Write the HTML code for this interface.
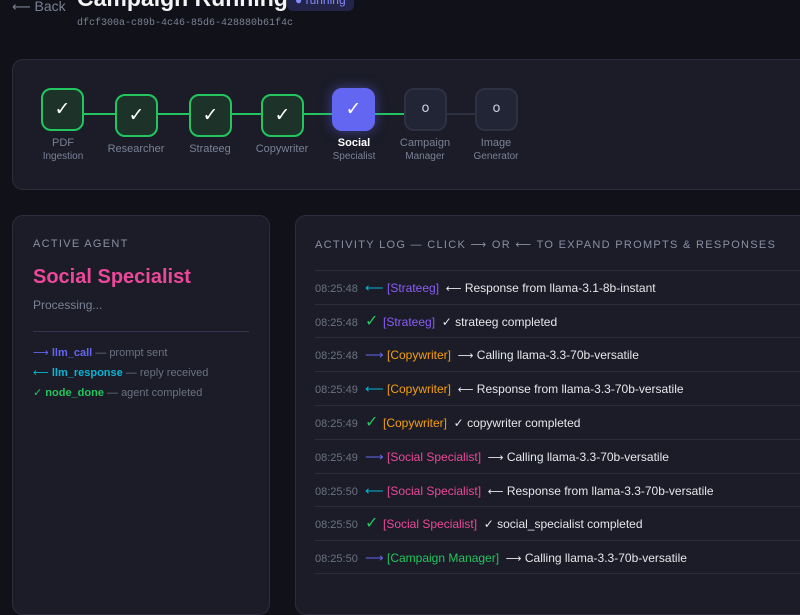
<!DOCTYPE html>
<html><head><meta charset="utf-8"><style>
*{margin:0;padding:0;box-sizing:border-box}
body{width:800px;height:600px;overflow:hidden;background:#111219;font-family:"Liberation Sans",sans-serif;position:relative;color:#e5e7eb}
.a{position:absolute;white-space:nowrap}
.panel{position:absolute;background:#1b1c28;border:1px solid #2b2d3c;border-radius:11px}
.box{position:absolute;width:43px;height:43px;border-radius:10px;border:2px solid #22c55e;background:#1d3329;color:#fff;font-size:19px;text-align:center;line-height:38px;font-family:"DejaVu Sans",sans-serif}
.pend{border-color:#2e3142;background:#222536;font-size:13px;color:#cbd5e1}
.ln{position:absolute;height:2px;background:#22c55e;top:113px}
.lab{position:absolute;text-align:center;width:90px;color:#7a8194;font-size:11px;line-height:13px}
.lab small{font-size:10px;display:block}
.row{position:absolute;left:315px;width:485px;height:34px;border-top:1px solid #2b2d3c;font-size:12px;line-height:33px;white-space:nowrap}
.t{color:#6b7280;font-size:11px;display:inline-block;width:50px}
.ic{display:inline-block;width:22px;font-size:13px}
.ar{font-family:"DejaVu Sans",sans-serif;font-size:11px}
</style></head><body>
<div class="a" style="left:12px;top:-2px;font-size:14px;color:#7a8194"><span class="ar" style="font-size:13px">⟵</span> Back</div>
<div class="a" style="left:77px;top:-15px;font-size:23px;font-weight:bold;color:#f3f4f6">Campaign Running</div>
<div class="a" style="left:287px;top:-9px;height:20px;padding:0 8px;border-radius:6px;background:#23244a;color:#818cf8;font-size:12px;line-height:18px">● running</div>
<div class="a" style="left:77px;top:18px;font-family:'Liberation Mono',monospace;font-size:10px;color:#7a8194">dfcf300a-c89b-4c46-85d6-428880b61f4c</div>

<div class="panel" style="left:12px;top:59px;width:800px;height:131px"></div>
<div class="ln" style="left:84px;width:31px"></div>
<div class="ln" style="left:157px;width:33px"></div>
<div class="ln" style="left:231px;width:30px"></div>
<div class="ln" style="left:303px;width:30px"></div>
<div class="ln" style="left:375px;width:30px"></div>
<div class="ln" style="left:446px;width:30px;background:#2e3142"></div>
<div class="box" style="left:41px;top:88px">✓</div>
<div class="box" style="left:115px;top:94px">✓</div>
<div class="box" style="left:189px;top:94px">✓</div>
<div class="box" style="left:261px;top:94px">✓</div>
<div class="box" style="left:332px;top:88px;background:#6366f1;border-color:#6366f1;box-shadow:0 0 12px rgba(99,102,241,.5)">✓</div>
<div class="box pend" style="left:404px;top:88px">o</div>
<div class="box pend" style="left:475px;top:88px">o</div>
<div class="lab" style="left:18px;top:137px">PDF<small>Ingestion</small></div>
<div class="lab" style="left:91px;top:143px">Researcher</div>
<div class="lab" style="left:165px;top:143px">Strateeg</div>
<div class="lab" style="left:237px;top:143px">Copywriter</div>
<div class="lab" style="left:309px;top:137px;color:#fff;font-weight:bold">Social<small style="font-weight:normal;color:#7a8194">Specialist</small></div>
<div class="lab" style="left:380px;top:137px">Campaign<small>Manager</small></div>
<div class="lab" style="left:451px;top:137px">Image<small>Generator</small></div>

<div class="panel" style="left:12px;top:215px;width:258px;height:400px"></div>
<div class="a" style="left:33px;top:238px;font-size:11px;letter-spacing:1.3px;color:#8a8fa3">ACTIVE AGENT</div>
<div class="a" style="left:33px;top:266px;font-size:20px;font-weight:bold;color:#ec4899">Social Specialist</div>
<div class="a" style="left:33px;top:298px;font-size:12px;color:#7a8194">Processing...</div>
<div class="a" style="left:33px;top:331px;width:216px;height:1px;background:#33364a"></div>
<div class="a" style="left:33px;top:346px;font-size:11px;color:#6b7280"><span style="color:#6366f1"><span class="ar">⟶</span> <b>llm_call</b></span> — prompt sent</div>
<div class="a" style="left:33px;top:366px;font-size:11px;color:#6b7280"><span style="color:#06b6d4"><span class="ar">⟵</span> <b>llm_response</b></span> — reply received</div>
<div class="a" style="left:33px;top:386px;font-size:11px;color:#6b7280"><span style="color:#22c55e">✓ <b>node_done</b></span> — agent completed</div>

<div class="panel" style="left:295px;top:215px;width:520px;height:400px"></div>
<div class="a" style="left:315px;top:238px;font-size:11px;letter-spacing:1.3px;color:#8a8fa3">ACTIVITY LOG — CLICK <span class="ar">⟶</span> OR <span class="ar">⟵</span> TO EXPAND PROMPTS &amp; RESPONSES</div>
<div class="row" style="top:270px"><span class="t">08:25:48</span><span class="ic" style="color:#06b6d4">⟵</span><span style="color:#8b5cf6">[Strateeg]</span>&nbsp; <span class="ar">⟵</span> Response from llama-3.1-8b-instant</div>
<div class="row" style="top:304px"><span class="t">08:25:48</span><span class="ic" style="color:#22c55e;width:18px;font-size:16px">✓</span><span style="color:#8b5cf6">[Strateeg]</span>&nbsp; ✓ strateeg completed</div>
<div class="row" style="top:337px"><span class="t">08:25:48</span><span class="ic" style="color:#6366f1">⟶</span><span style="color:#f59e0b">[Copywriter]</span>&nbsp; <span class="ar">⟶</span> Calling llama-3.3-70b-versatile</div>
<div class="row" style="top:371px"><span class="t">08:25:49</span><span class="ic" style="color:#06b6d4">⟵</span><span style="color:#f59e0b">[Copywriter]</span>&nbsp; <span class="ar">⟵</span> Response from llama-3.3-70b-versatile</div>
<div class="row" style="top:405px"><span class="t">08:25:49</span><span class="ic" style="color:#22c55e;width:18px;font-size:16px">✓</span><span style="color:#f59e0b">[Copywriter]</span>&nbsp; ✓ copywriter completed</div>
<div class="row" style="top:439px"><span class="t">08:25:49</span><span class="ic" style="color:#6366f1">⟶</span><span style="color:#ec4899">[Social Specialist]</span>&nbsp; <span class="ar">⟶</span> Calling llama-3.3-70b-versatile</div>
<div class="row" style="top:473px"><span class="t">08:25:50</span><span class="ic" style="color:#06b6d4">⟵</span><span style="color:#ec4899">[Social Specialist]</span>&nbsp; <span class="ar">⟵</span> Response from llama-3.3-70b-versatile</div>
<div class="row" style="top:506px"><span class="t">08:25:50</span><span class="ic" style="color:#22c55e;width:18px;font-size:16px">✓</span><span style="color:#ec4899">[Social Specialist]</span>&nbsp; ✓ social_specialist completed</div>
<div class="row" style="top:540px;border-bottom:1px solid #2b2d3c"><span class="t">08:25:50</span><span class="ic" style="color:#6366f1">⟶</span><span style="color:#22c55e">[Campaign Manager]</span>&nbsp; <span class="ar">⟶</span> Calling llama-3.3-70b-versatile</div>
</body></html>
